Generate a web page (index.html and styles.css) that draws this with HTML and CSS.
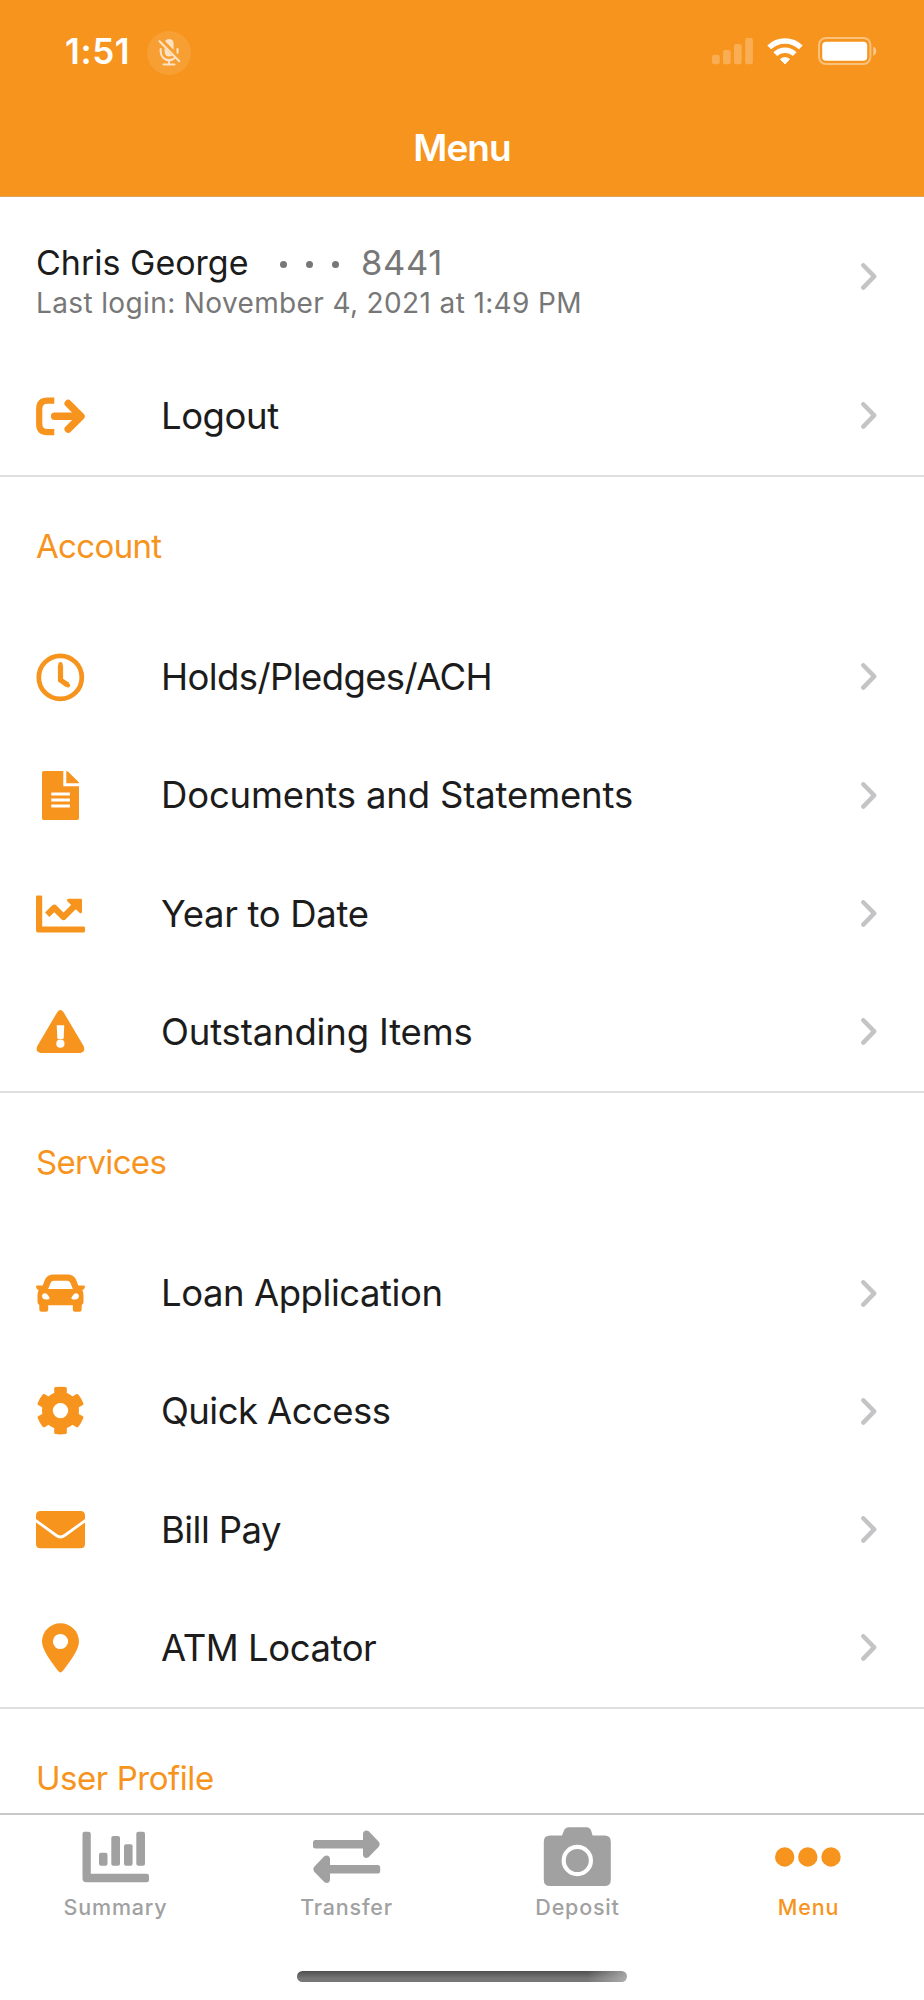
FILE: index.html
```html
<!DOCTYPE html>
<html lang="en">
<head>
<meta charset="utf-8">
<title>Menu</title>
<link rel="stylesheet" href="styles.css">
</head>
<body>
<svg class="defs" width="0" height="0" aria-hidden="true">
  <symbol id="chevron" viewBox="0 0 16 27"><path d="M2.3 2.3 13.2 13.4 2.3 24.6" fill="none" stroke="currentColor" stroke-width="4.4" stroke-linecap="round" stroke-linejoin="round"/></symbol>
</svg>
<div class="screen">
  <header class="header">
    <div class="status">
      <span class="time">1:51</span>
      <span class="mic">
        <svg width="44" height="44" viewBox="0 0 44 44" fill="none" stroke="currentColor" stroke-width="2.1" stroke-linecap="round">
          <rect x="17.6" y="8" width="9" height="17.5" rx="4.5" fill="currentColor" stroke="none"/>
          <path d="M13.7 18v2.700a8.400 8.400 0 0 0 16.800 0V18M22 29v4.500M16.500 33.500h11"/>
          <path class="mic-gap" d="M12 7.500 34 30" stroke-width="5"/>
          <path d="M12.500 10.200 32.300 30.200"/>
        </svg>
      </span>
      <svg class="signal" width="41" height="27" viewBox="0 0 41 27" fill="currentColor">
        <rect y="16.700" width="7.700" height="9.600" rx="2.300"/><rect x="11" y="12" width="7.700" height="14.300" rx="2.300"/><rect x="22" y="6" width="7.700" height="20.300" rx="2.300"/><rect x="33.200" y="0" width="7.700" height="26.300" rx="2.300"/>
      </svg>
      <svg class="wifi" width="36" height="27" viewBox="0 0 36 27" fill="none" stroke="currentColor" stroke-width="5.400">
        <path d="M2.200 9.400a22.700 22.700 0 0 1 31.600 0"/><path d="M8.300 16.200a13.800 13.800 0 0 1 19.400 0"/>
        <path d="M13.300 21.300a7 7 0 0 1 9.400 0L18 26Z" fill="currentColor" stroke="currentColor" stroke-width=".8" stroke-linejoin="round"/>
      </svg>
      <svg class="battery" width="59" height="28" viewBox="0 0 59 28" fill="currentColor">
        <rect x="1" y="1" width="51.400" height="26" rx="7" fill="none" stroke="currentColor" stroke-width="2" opacity=".42"/>
        <rect x="4.200" y="4.800" width="45" height="19" rx="3.800"/>
        <path d="M55.300 9.600c3.900 1.600 3.900 7.600 0 9.200Z" opacity=".5"/>
      </svg>
    </div>
    <h1 class="title">Menu</h1>
  </header>

  <main class="content">
    <a class="profile">
      <span class="profile-text">
        <span class="profile-line"><span class="name">Chris George</span><span class="dots"><i></i><i></i><i></i></span><span class="number">8441</span></span>
        <span class="login">Last login: November 4, 2021 at 1:49 PM</span>
      </span>
      <svg class="chevron"><use href="#chevron"/></svg>
    </a>
    <a class="row">
      <svg class="icon" viewBox="0 0 49 49" fill="none" stroke="currentColor"><path d="M18.300 8.600H11.500Q3.200 8.600 3.200 17V32Q3.200 40.200 11.500 40.200H18.300" stroke-width="6.200"/><path d="M18.600 24.300H43" stroke-width="7.400" stroke-linecap="round"/><path d="M32.200 11.500 45 24.300 32.200 37.100" stroke-width="7.400" stroke-linecap="round" stroke-linejoin="round"/></svg>
      <span class="label l-logout">Logout</span><svg class="chevron"><use href="#chevron"/></svg>
    </a>

    <section class="group">
      <h2 class="heading h-account">Account</h2>
      <a class="row">
        <svg class="icon" viewBox="0 0 49 49" fill="none" stroke="currentColor"><circle cx="24.300" cy="24.400" r="21.500" stroke-width="4.700"/><path d="M24.500 12.300V27.200L31.700 32" stroke-width="5.200" stroke-linejoin="round"/><path d="M24.500 11.200V12.500M31 31.500l1 .7" stroke-width="4.400" stroke-linecap="round"/></svg>
        <span class="label l-holds">Holds/Pledges/ACH</span><svg class="chevron"><use href="#chevron"/></svg>
      </a>
      <a class="row">
        <svg class="icon" viewBox="0 0 49 49" fill="currentColor"><path fill-rule="evenodd" d="M7.800 0H27.300V15.200H43V47.200Q43 49 41.200 49H7.800Q6 49 6 47.200V1.800Q6 0 7.800 0ZM15.300 21.400V24.400H33.900V21.400ZM15.300 27.400V30.400H33.900V27.400ZM15.300 33.500V36.500H33.900V33.500Z"/><path d="M30.300 0Q31.400 0 32.200.8L42.300 10.700Q43 11.400 43 12.200H30.300Z"/></svg>
        <span class="label l-docs">Documents and Statements</span><svg class="chevron"><use href="#chevron"/></svg>
      </a>
      <a class="row">
        <svg class="icon" viewBox="0 0 49 49" fill="currentColor"><path d="M1.300 5.600H4.900Q6.200 5.600 6.200 6.900V36.400H47.700Q49 36.400 49 37.700V41.300Q49 42.600 47.700 42.600H2Q0 42.600 0 40.600V6.900Q0 5.600 1.300 5.600Z"/><path d="M11.200 24.800 18.300 17.800 27.500 27 39.500 15" fill="none" stroke="currentColor" stroke-width="6.200" stroke-linejoin="round"/><path d="M33 8.700H44.700Q46 8.700 46 10V21.500Q46 24.300 43.500 22.800L31.500 11.500Q30 8.700 33 8.700Z"/></svg>
        <span class="label l-year">Year to Date</span><svg class="chevron"><use href="#chevron"/></svg>
      </a>
      <a class="row">
        <svg class="icon" viewBox="0 0 49 49" fill="currentColor"><path fill-rule="evenodd" d="M21.200 4.200Q24.400 0 27.600 4.200L47.700 38.300Q49.800 43.800 44.500 44.900H4.500Q-.9 43.800 1.200 38.300ZM20.700 17.200 21.300 30.200Q21.400 31 22.200 31H26.800Q27.600 31 27.700 30.200L28.200 17.200Z"/><circle class="cutout" cx="24.400" cy="35.700" r="4.100"/></svg>
        <span class="label l-out">Outstanding Items</span><svg class="chevron"><use href="#chevron"/></svg>
      </a>
    </section>

    <section class="group">
      <h2 class="heading h-services">Services</h2>
      <a class="row">
        <svg class="icon" viewBox="0 0 49 49" fill="currentColor"><path fill-rule="evenodd" d="M17.500 5.600H31.500Q37.500 5.600 40 10.500L42.300 16.600H48Q49.400 16.800 48.900 18.200Q48.300 20.800 46.300 21Q47.500 23 47.500 26V33Q47.500 34.800 45.700 36V40.500Q45.700 42.700 43.500 42.700H39Q36.800 42.700 36.800 40.500V36.200H12.200V40.500Q12.200 42.700 10 42.700H5.500Q3.300 42.700 3.300 40.500V36Q1.500 34.800 1.500 33V26Q1.500 23 2.700 21Q.7 20.800.1 18.200Q-.4 16.800 1 16.600H6.700L9 10.500Q11.500 5.600 17.500 5.600ZM18 11.800Q15.600 11.800 14.500 14L12.200 20.100H36.800L34.500 14Q33.400 11.800 31 11.800ZM9 24.200C5 24.200 4.800 30.600 10.200 30.600C14.400 30.600 14.200 29.300 12.200 26.500Q10.800 24.200 9 24.200ZM40 24.200Q38.200 24.200 36.800 26.500C34.800 29.300 34.600 30.600 38.800 30.600C44.200 30.600 44 24.200 40 24.200Z"/></svg>
        <span class="label l-loan">Loan Application</span><svg class="chevron"><use href="#chevron"/></svg>
      </a>
      <a class="row">
        <svg class="icon" viewBox="-24.500 -23.600 49 49" fill="currentColor"><circle r="13.100" fill="none" stroke="currentColor" stroke-width="10.800"/><g id="teeth"><path id="tooth" d="M-6.300-16V-22.200Q-6.200-23.300-5-23.500Q0-24.200 5-23.500Q6.200-23.300 6.300-22.200V-16L4-13H-4Z"/><use href="#tooth" transform="rotate(60)"/><use href="#tooth" transform="rotate(120)"/></g><use href="#teeth" transform="rotate(180)"/></svg>
        <span class="label l-quick">Quick Access</span><svg class="chevron"><use href="#chevron"/></svg>
      </a>
      <a class="row">
        <svg class="icon" viewBox="0 0 49 49" fill="currentColor"><path d="M4.500 5H44.500Q49 5 49 9.500V13L28.500 27.800Q24.500 31 20.500 27.800L0 13V9.500Q0 5 4.500 5Z"/><path d="M0 16.400 19.300 30.400Q24.500 34.400 29.700 30.400L49 16.400V37.800Q49 42.300 44.500 42.300H4.500Q0 42.300 0 37.800Z"/></svg>
        <span class="label l-bill">Bill Pay</span><svg class="chevron"><use href="#chevron"/></svg>
      </a>
      <a class="row">
        <svg class="icon" viewBox="0 0 49 49" fill="currentColor"><path fill-rule="evenodd" d="M24.500-.8C34.800-.8 43 7.400 43 17.700C43 26 32.500 39.500 26.500 47.300Q24.500 49.500 22.500 47.300C16.500 39.500 6 26 6 17.700C6 7.400 14.200-.8 24.500-.8ZM24.500 9.900a7.600 7.600 0 1 0 0 15.200a7.600 7.600 0 1 0 0-15.200Z"/></svg>
        <span class="label l-atm">ATM Locator</span><svg class="chevron"><use href="#chevron"/></svg>
      </a>
    </section>

    <section class="group"><h2 class="heading h-user">User Profile</h2></section>
  </main>

  <nav class="tabs">
    <a class="tab">
      <svg class="tab-icon" viewBox="0 0 68 60" fill="currentColor"><path d="M2.500 4.700H6.500Q8.800 4.700 8.800 7V46.700H64.700Q67 46.700 67 49V53Q67 55.300 64.700 55.300H4.200Q.5 55 .5 51.500V7Q.5 4.700 2.500 4.700Z"/><rect x="17" y="25.700" width="8.500" height="13" rx="2"/><rect x="29.300" y="9" width="8.700" height="29.700" rx="2"/><rect x="42" y="17.300" width="8.600" height="21.400" rx="2"/><rect x="54.300" y="4.700" width="8.700" height="34" rx="2"/></svg>
      <span class="tab-label t-summary">Summary</span>
    </a>
    <a class="tab">
      <svg class="tab-icon" viewBox="0.500 0 68 60" fill="currentColor"><path d="M3 13H50.500V6.500Q51.500 2.500 56 4L66.500 15Q68.200 17.200 66.500 19.500L56 30.300Q51.500 32.500 50.500 28V21.500H3Q.5 21.500.5 19V15.500Q.5 13 3 13Z"/><path d="M65.200 38H17.500V31.500Q16.500 27.500 12 29L1.500 40Q-.2 42.200 1.500 44.500L12 55.300Q16.500 57.500 17.500 53V46.500H65.200Q67.700 46.500 67.700 44V40.500Q67.700 38 65.200 38Z"/></svg>
      <span class="tab-label t-transfer">Transfer</span>
    </a>
    <a class="tab">
      <svg class="tab-icon" viewBox="0.700 0 68 60" fill="currentColor"><path d="M6.800 8.600H18.700L20.500 4Q22 .3 25.500.3H43.500Q46.500.3 48 4L49.300 8.600H61.200Q67.500 8.600 67.500 14.900V52.700Q67.500 59 61.200 59H6.800Q.5 59 .5 52.700V14.900Q.5 8.600 6.800 8.600Z"/><circle class="lens" cx="34" cy="33.500" r="13.600"/></svg>
      <span class="tab-label t-deposit">Deposit</span>
    </a>
    <a class="tab active">
      <svg class="tab-icon" viewBox="0.500 0 68 60" fill="currentColor"><circle cx="10.200" cy="30" r="9.700"/><circle cx="33.300" cy="30" r="9.700"/><circle cx="56.500" cy="30" r="9.700"/></svg>
      <span class="tab-label t-menu">Menu</span>
    </a>
    <span class="home"></span>
  </nav>
</div>
</body>
</html>
```

FILE: styles.css
```css
* { box-sizing: border-box; }
body { margin: 0; background: #fff; font-family: Inter, "Liberation Sans", sans-serif; color: #1c1c1c; }
svg { display: block; flex: none; overflow: visible; }
.defs { position: absolute; }
.screen { width: 924px; height: 2000px; display: flex; flex-direction: column; overflow: hidden; }

.header { height: 197px; flex: none; background: #f7941d; color: #fff; border-bottom: 1px solid #dfa45c; }
.status { height: 102px; padding: 0 47px 0 65px; display: flex; align-items: center; }
.time { width: 81.500px; font-size: 35px; font-weight: 600; line-height: 40px; letter-spacing: .6px; white-space: nowrap; }
.mic { width: 44px; height: 44px; margin-top: 3px; border-radius: 50%; background: #f89f34; color: #fde3c3; }
.mic-gap { stroke: #f89f34; stroke-linecap: butt; }
.signal { margin-left: auto; color: #faae54; }
.wifi { margin-left: 14px; }
.battery { margin-left: 15px; margin-right: 0; }
.title { margin: 0; padding-top: 23px; text-align: center; font-size: 37px; line-height: 46px; font-weight: 600; letter-spacing: -1px; }

.content { flex: 1; min-height: 0; overflow: hidden; display: flex; flex-direction: column; }
.profile { height: 159.600px; flex: none; display: flex; align-items: flex-start; justify-content: space-between; padding: 45px 46px 0 36px; }
.profile-text { display: flex; flex-direction: column; }
.profile-line { display: flex; align-items: center; height: 41px; font-size: 34px; line-height: 41px; white-space: nowrap; }
.name { width: 244px; }
.dots { display: flex; gap: 18.500px; width: 81px; margin-top: 4px; }
.dots i { width: 7.300px; height: 7.300px; border-radius: 50%; background: #777; }
.number { color: #777; font-size: 34.500px; letter-spacing: .7px; }
.login { margin-top: 2px; color: #777; font-size: 28px; line-height: 36px; letter-spacing: .37px; white-space: nowrap; }
.profile .chevron { margin-top: 21px; }
.row { height: 118.270px; flex: none; display: flex; align-items: center; padding: 0 46px 0 36px; }
.icon { width: 49px; height: 49px; color: #f7941d; margin: 1px 76px 0 0; }
.cutout { fill: #fff; }
.label { flex: 1; font-size: 36.500px; line-height: 46px; white-space: nowrap; }
.l-logout, .l-loan, .l-atm { letter-spacing: -.45px; }
.l-holds { letter-spacing: -.6px; }
.l-docs, .l-out { letter-spacing: -.16px; }
.l-year { letter-spacing: -.32px; }
.l-quick, .l-bill { letter-spacing: -.56px; }
.chevron { width: 16px; height: 27px; margin-right: 1px; color: #c4c4c6; }
.group { flex: none; border-top: 2px solid #dedfdf; }
.heading { margin: 0; height: 141px; padding: 48px 36px 0; font-size: 33px; line-height: 42px; font-weight: 400; color: #f7941d; white-space: nowrap; }
.h-account, .h-services { letter-spacing: -.65px; }
.h-user { letter-spacing: -.45px; }

.tabs { position: relative; height: 187px; flex: none; border-top: 2px solid #c8c8c8; display: grid; grid-template-columns: repeat(4, 1fr); background: #fff; }
.tab { display: flex; flex-direction: column; align-items: center; padding-top: 12px; color: #a1a1a1; }
.tab.active { color: #f7941d; }
.tab-icon { width: 68px; height: 60px; }
.lens { fill: none; stroke: #fff; stroke-width: 4.200px; }
.tab-label { margin-top: 6px; font-size: 21.500px; line-height: 28px; font-weight: 450; letter-spacing: .8px; white-space: nowrap; }
.home { position: absolute; left: 297px; top: 156px; width: 330px; height: 11px; border-radius: 6px; background: linear-gradient(90deg, transparent 88%, rgba(200,200,200,.65) 100%), linear-gradient(#505050, #777 70%); }
```
